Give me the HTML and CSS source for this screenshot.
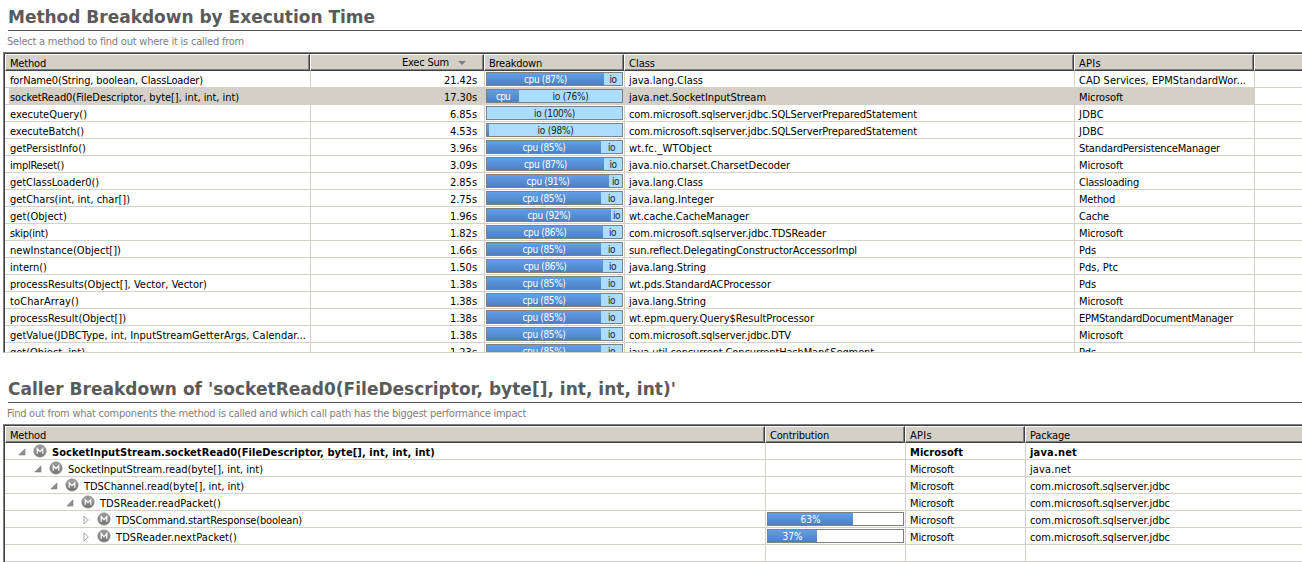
FILE: index.html
```
<!DOCTYPE html>
<html lang="en">
<head>
<meta charset="utf-8">
<title>Method Breakdown</title>
<link rel="stylesheet" href="styles.css">
</head>
<body>
<svg width="0" height="0" class="defs">
  <defs>
    <linearGradient id="disc" x1="0" y1="0" x2="0" y2="1"><stop offset="0" stop-color="#a0a0a0"/><stop offset="1" stop-color="#747474"/></linearGradient>
    <symbol id="method" viewBox="0 0 14 14"><circle cx="7" cy="7" r="6.1" fill="url(#disc)" stroke="#808080" stroke-width=".8"/><path d="M4.2 9.8V4.5L7 7.6l2.8-3.1V9.8" fill="none" stroke="#fff" stroke-width="1.2"/></symbol>
    <symbol id="open" viewBox="0 0 8 8"><path d="M7 .8V7H.8z" fill="#8c8c8c" stroke="#808080" stroke-width=".6"/></symbol>
    <symbol id="closed" viewBox="0 0 8 10"><path d="M2 1l4.3 4L2 9z" fill="#fff" stroke="#a6a6a6" stroke-width="1"/></symbol>
  </defs>
</svg>
<section class="panel methods">
  <h1 class="title"><span data-w="367">Method Breakdown by Execution Time</span></h1>
  <p class="hint"><span data-w="237">Select a method to find out where it is called from</span></p>
  <div class="table">
    <div class="head">
      <div class="th"><span data-w="36">Method</span></div>
      <div class="th sum"><span data-w="47">Exec Sum</span><i class="sort"></i></div>
      <div class="th"><span data-w="53">Breakdown</span></div>
      <div class="th"><span data-w="26">Class</span></div>
      <div class="th"><span data-w="22">APIs</span></div>
      <div class="th last"></div>
    </div>
    <div class="body" id="methods"></div>
  </div>
</section>
<section class="panel callers">
  <h1 class="title"><span data-w="668">Caller Breakdown of 'socketRead0(FileDescriptor, byte[], int, int, int)'</span></h1>
  <p class="hint"><span data-w="519">Find out from what components the method is called and which call path has the biggest performance impact</span></p>
  <div class="table">
    <div class="head">
      <div class="th"><span data-w="36">Method</span></div>
      <div class="th"><span data-w="59">Contribution</span></div>
      <div class="th"><span data-w="22">APIs</span></div>
      <div class="th last"><span data-w="40">Package</span></div>
    </div>
    <div class="body" id="callers"></div>
  </div>
</section>
<script src="app.js"></script>
</body>
</html>
```

FILE: styles.css
```
* { box-sizing: border-box; }
body { margin: 0; width: 1302px; height: 562px; overflow: hidden; background: #fff; color: #000; font: 11px/16px "DejaVu Sans Condensed", "DejaVu Sans", sans-serif; font-stretch: condensed; }
.defs { display: block; height: 0; }
.panel { display: flex; flex-direction: column; overflow: hidden; }
.methods { height: 353px; padding-top: 5px; }
.callers { height: 209px; padding-top: 24px; }
.title { margin: 0 0 0 8px; height: 26px; border-bottom: 1px solid #555; color: #5a5a5a; font: bold 17px/24px "DejaVu Sans", sans-serif; white-space: nowrap; }
.hint { margin: 0 0 0 7px; height: 21px; line-height: 21px; color: #808080; white-space: nowrap; }
.table { flex: 1; min-height: 0; margin-left: 3px; border-left: 1px solid #808080; border-top: 1px solid #808080; overflow: hidden; display: flex; flex-direction: column; }
.methods .table { border-bottom: 1px solid #d4d0c8; }
.head { border-left: 1px solid #404040; border-top: 1px solid #404040; height: 18px; flex: none; }
.head, .row { display: grid; }
.methods .head, .methods .row { grid-template-columns: 305px 174px 140px 450px 180px 1fr; }
.callers .head, .callers .row { grid-template-columns: 760px 140px 120px 1fr; }
.th { background: #d4d0c8; border: 1px solid; border-color: #fff #404040 #404040 #fff; box-shadow: inset -1px -1px #808080; padding-left: 4px; line-height: 17px; height: 17px; white-space: nowrap; }
.th.last { border-right: 0; box-shadow: inset 0 -1px #808080; }
.th.sum { display: flex; align-items: center; justify-content: flex-end; padding-right: 17px; }
.sort { border: 4px solid transparent; border-top-color: #808080; border-bottom: 0; margin-left: 9px; }
.body { flex: 1; min-height: 0; overflow: hidden; border-left: 1px solid #404040; }
.row { height: 17px; }
.td { height: 17px; border-bottom: 1px solid #d4d0c8; border-left: 1px solid #d4d0c8; padding-left: 4px; line-height: 19px; white-space: nowrap; overflow: hidden; }
.td:first-child { border-left: 0; padding-left: 5px; }
.td.num { text-align: right; padding-right: 7px; }
.td.gauge { padding: 1px 0 0 1px; }
.selected .td:not(:last-child) { background: #d4d0c8; }
.selected .td:first-child { background: linear-gradient(90deg, #fff 4px, #d4d0c8 4px); }
.bar { display: flex; width: 137px; height: 14px; border: 1px solid #808080; background: #fff; font-size: 10px; line-height: 14px; text-align: center; }
.fill { flex: none; color: #fff; background: linear-gradient(#629fe8, #4c80c3); overflow: hidden; }
.io { flex: 1; min-width: 0; background: #aaddff; color: #222; }
.td.tree { display: flex; padding-left: 13px; }
.tree svg { flex: none; }
.toggle { width: 8px; height: 10px; margin-top: 4px; }
.toggle.expanded { height: 8px; margin-top: 5px; }
.disc { width: 14px; height: 14px; margin: 1px 5px 0 7px; }
.indent { flex: none; width: 16px; }
.strong { font-weight: bold; }
```

FILE: app.js
```
const methods = [
  ['forName0(String, boolean, ClassLoader)', 193, '21.42s', 87, 'java.lang.Class', 74, 'CAD Services, EPMStandardWor...', 167],
  ['socketRead0(FileDescriptor, byte[], int, int, int)', 229, '17.30s', 24, 'java.net.SocketInputStream', 137, 'Microsoft', 44],
  ['executeQuery()', 77, '6.85s', 0, 'com.microsoft.sqlserver.jdbc.SQLServerPreparedStatement', 288, 'JDBC', 25],
  ['executeBatch()', 74, '4.53s', 2, 'com.microsoft.sqlserver.jdbc.SQLServerPreparedStatement', 288, 'JDBC', 25],
  ['getPersistInfo()', 76, '3.96s', 85, 'wt.fc._WTObject', 83, 'StandardPersistenceManager', 141],
  ['implReset()', 54, '3.09s', 87, 'java.nio.charset.CharsetDecoder', 161, 'Microsoft', 44],
  ['getClassLoader0()', 89, '2.85s', 91, 'java.lang.Class', 74, 'Classloading', 60],
  ['getChars(int, int, char[])', 120, '2.75s', 85, 'java.lang.Integer', 85, 'Method', 36],
  ['get(Object)', 57, '1.96s', 92, 'wt.cache.CacheManager', 120, 'Cache', 30],
  ['skip(int)', 38, '1.82s', 86, 'com.microsoft.sqlserver.jdbc.TDSReader', 197, 'Microsoft', 44],
  ['newInstance(Object[])', 111, '1.66s', 85, 'sun.reflect.DelegatingConstructorAccessorImpl', 228, 'Pds', 17],
  ['intern()', 37, '1.50s', 86, 'java.lang.String', 77, 'Pds, Ptc', 39],
  ['processResults(Object[], Vector, Vector)', 197, '1.38s', 85, 'wt.pds.StandardACProcessor', 142, 'Pds', 17],
  ['toCharArray()', 69, '1.38s', 85, 'java.lang.String', 77, 'Microsoft', 44],
  ['processResult(Object[])', 116, '1.38s', 85, 'wt.epm.query.Query$ResultProcessor', 185, 'EPMStandardDocumentManager', 154],
  ['getValue(JDBCType, int, InputStreamGetterArgs, Calendar...', 296, '1.38s', 85, 'com.microsoft.sqlserver.jdbc.DTV', 162, 'Microsoft', 44],
  ['get(Object, int)', 75, '1.23s', 85, 'java.util.concurrent.ConcurrentHashMap$Segment', 245, 'Pds', 17],
];
const jdbc = 'com.microsoft.sqlserver.jdbc';
const callers = [
  ['SocketInputStream.socketRead0(FileDescriptor, byte[], int, int, int)', 383, 0, 'java.net', 47],
  ['SocketInputStream.read(byte[], int, int)', 195, 0, 'java.net', 41],
  ['TDSChannel.read(byte[], int, int)', 160, 0, jdbc, 140],
  ['TDSReader.readPacket()', 121, 0, jdbc, 140],
  ['TDSCommand.startResponse(boolean)', 186, 63, jdbc, 140],
  ['TDSReader.nextPacket()', 121, 37, jdbc, 140],
];

const text = (s, w) => `<span data-w="${w}">${s}</span>`;
const td = (inner, cls = '') => `<div class="td ${cls}">${inner}</div>`;

function breakdown(cpu) {
  const io = 100 - cpu;
  const cpuLabel = cpu > 50 ? text(`cpu (${cpu}%)`, 43) : cpu > 10 ? text('cpu', 14) : '';
  const ioLabel = io > 50 ? text(`io (${io}%)`, io === 100 ? 41 : 36) : text('io', 7);
  return `<div class="bar"><div class="fill" style="width:${Math.floor(cpu * 1.35)}px">${cpuLabel}</div><div class="io">${ioLabel}</div></div>`;
}

document.getElementById('methods').innerHTML = methods.map((m, i) =>
  `<div class="row${i === 1 ? ' selected' : ''}">` +
  td(text(m[0], m[1])) + td(text(m[2], m[2].length > 5 ? 33 : 27), 'num') + td(breakdown(m[3]), 'gauge') +
  td(text(m[4], m[5])) + td(text(m[6], m[7])) + td('') + '</div>').join('');

document.getElementById('callers').innerHTML = callers.map(([name, w, pct, pkg, pw], i) => {
  const leaf = i > 3;
  const toggle = leaf
    ? '<svg class="toggle"><use href="#closed"/></svg>'
    : '<svg class="toggle expanded"><use href="#open"/></svg>';
  const tree = '<i class="indent"></i>'.repeat(Math.min(i, 4)) + toggle +
    '<svg class="disc"><use href="#method"/></svg>' + text(name, w);
  const bar = pct ? `<div class="bar"><div class="fill" style="width:${Math.floor(pct * 1.35)}px">${text(pct + '%', 20)}</div></div>` : '';
  return `<div class="row${i ? '' : ' strong'}">` + td(tree, 'tree') + td(bar, 'gauge') +
    td(text('Microsoft', i ? 44 : 53)) + td(text(pkg, pw)) + '</div>';
}).join('') + '<div class="row">' + td('').repeat(4) + '</div>';

// Tune tracking so each label occupies its measured column width.
document.querySelectorAll('[data-w]').forEach(el => {
  const gap = (el.dataset.w - el.getBoundingClientRect().width) / el.textContent.length;
  el.style.letterSpacing = gap.toFixed(3) + 'px';
});
```
